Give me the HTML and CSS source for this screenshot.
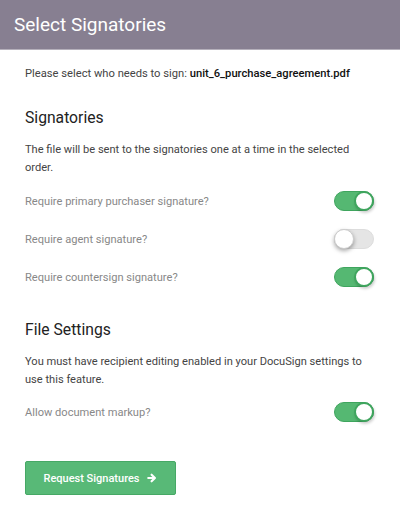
FILE: index.html
```html
<!DOCTYPE html>
<html lang="en">
<head>
    <meta charset="UTF-8">
    <meta name="viewport" content="width=device-width, initial-scale=1.0">
    <title>Select Signatories</title>
    <link rel="stylesheet" href="styles.css">
</head>
<body>

    <!-- Header -->
    <div class="header">
        <h1>Select Signatories</h1>
    </div>

    <div class="content">
        <p class="intro">Please select who needs to sign: <b>unit_6_purchase_agreement.pdf</b></p>

        <!-- Signatories -->
        <h2>Signatories</h2>
        <p class="note">The file will be sent to the signatories one at a time in the selected order.</p>

        <div class="row">
            <span>Require primary purchaser signature?</span>
            <span class="switch on"></span>
        </div>
        <div class="row">
            <span>Require agent signature?</span>
            <span class="switch"></span>
        </div>
        <div class="row">
            <span>Require countersign signature?</span>
            <span class="switch on"></span>
        </div>

        <!-- File Settings -->
        <h2 class="second">File Settings</h2>
        <p class="note">You must have recipient editing enabled in your DocuSign settings to use this feature.</p>

        <div class="row">
            <span>Allow document markup?</span>
            <span class="switch on"></span>
        </div>

        <button class="submit">Request Signatures
            <svg width="10" height="10" viewBox="0 0 12 12"><path d="M1.5 6h7.5M5.5 2l4 4-4 4" stroke="#fff" stroke-width="2.6" fill="none" stroke-linecap="round" stroke-linejoin="round"/></svg>
        </button>
    </div>

</body>
</html>
```

FILE: styles.css
```css
body {
    margin: 0;
    padding: 0;
    font-family: Roboto, "Liberation Sans", sans-serif;
    background: white;
    color: #333;
}

.header {
    background: #877f91;
    height: 49px;
    border-bottom: 1px solid #b5b0bb;
    display: flex;
    align-items: center;
    padding: 0 14px;
}

.header h1 {
    margin: 0;
    color: white;
    font-size: 19px;
    font-weight: 400;
}

.content {
    padding: 16px 25px 0 25px;
}

.intro {
    margin: 0;
    font-size: 11.2px;
    line-height: 16px;
    color: #444;
}

.intro b {
    font-weight: 500;
    color: #111;
}

h2 {
    margin: 25px 0 0 0;
    font-size: 15.7px;
    font-weight: 400;
    line-height: 22px;
    color: #222;
}

h2.second {
    margin-top: 23px;
}

.note {
    margin: 12px 0 5px 0;
    font-size: 11.1px;
    line-height: 18px;
    color: #444;
}

.second + .note {
    margin-bottom: 4px;
}

.row {
    display: flex;
    justify-content: space-between;
    align-items: center;
    height: 38px;
    font-size: 11.1px;
    color: #888;
}

/* Toggle switch */
.switch {
    position: relative;
    width: 40px;
    height: 20px;
    border-radius: 10px;
    background: #e5e5e5;
    box-sizing: border-box;
    border: 1px solid #ddd;
    margin-right: 1px;
}

.switch::after {
    content: "";
    position: absolute;
    top: -1px;
    left: -1px;
    width: 20px;
    height: 20px;
    border-radius: 50%;
    background: white;
    box-sizing: border-box;
    border: 1px solid #ccc;
    box-shadow: 0 2px 4px rgba(0,0,0,0.35);
}

.switch.on {
    background: #55b872;
    border-color: #3fa55e;
}

.switch.on::after {
    left: auto;
    right: -1px;
    border: 2px solid #3fa55e;
    box-shadow: 1px 2px 3px rgba(0,0,0,0.2);
}

.submit {
    margin-top: 30px;
    width: 151px;
    height: 34px;
    background: #58b977;
    border: 1px solid #46a865;
    border-radius: 2px;
    color: white;
    font-family: Roboto, "Liberation Sans", sans-serif;
    font-size: 11px;
    font-weight: 500;
    display: flex;
    align-items: center;
    justify-content: center;
    gap: 8px;
    cursor: pointer;
}
```
